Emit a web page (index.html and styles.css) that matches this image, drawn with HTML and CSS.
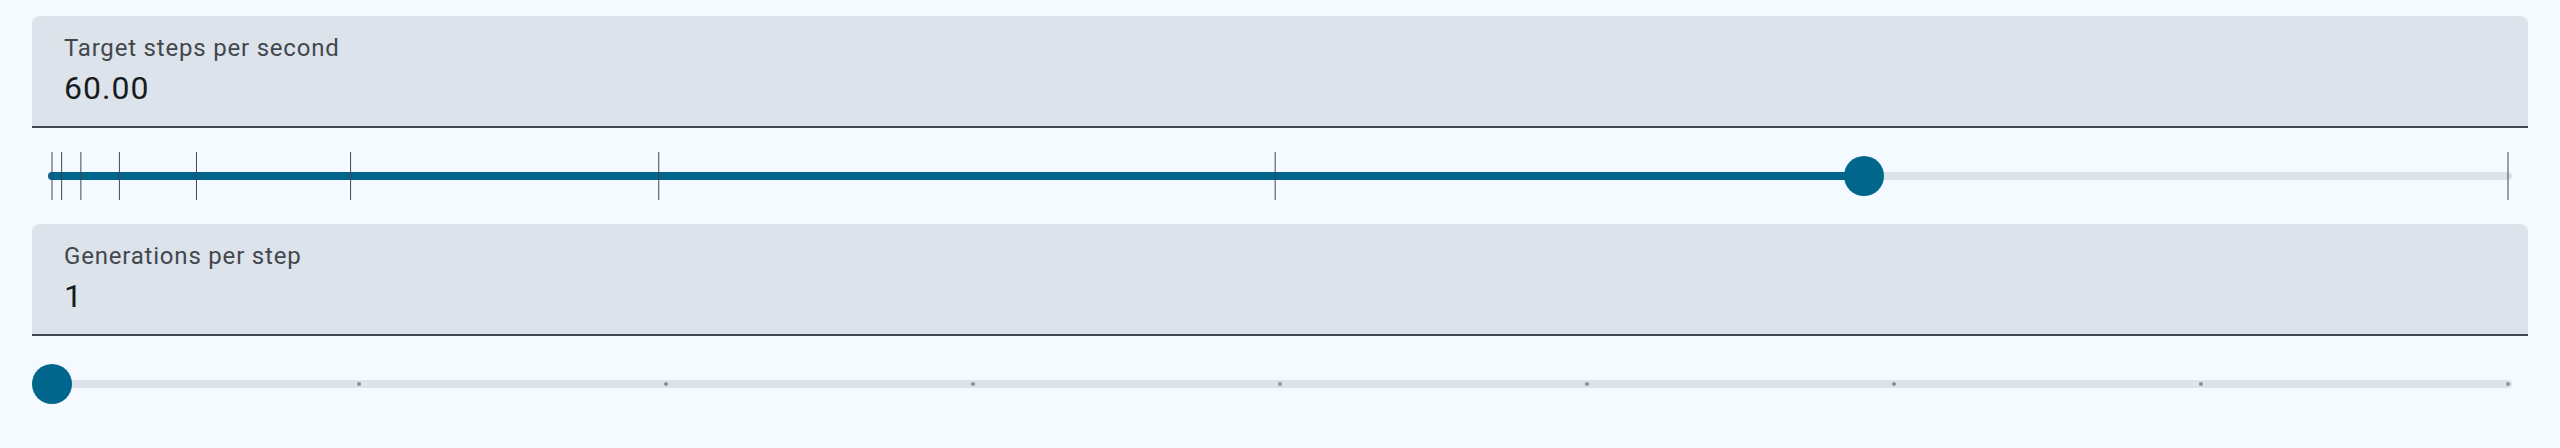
FILE: index.html
```html
<!DOCTYPE html>
<html lang="en">
<head>
<meta charset="utf-8">
<title>Simulation speed</title>
<link rel="stylesheet" href="styles.css">
</head>
<body>
<main class="panel">
  <div class="field">
    <label class="field-label" for="sps">Target steps per second</label>
    <div class="field-value" id="sps">60.00</div>
  </div>
  <div class="slider">
    <div class="track"></div>
    <div class="track-active" style="width: calc(4px + 0.7378 * (100% - 40px))"></div>
    <svg class="ticks" width="100%" height="48" aria-hidden="true">
      <line x1="0%" x2="0%" y1="0" y2="48"></line>
      <line x1="0.392%" x2="0.392%" y1="0" y2="48"></line>
      <line x1="1.176%" x2="1.176%" y1="0" y2="48"></line>
      <line x1="2.745%" x2="2.745%" y1="0" y2="48"></line>
      <line x1="5.882%" x2="5.882%" y1="0" y2="48"></line>
      <line x1="12.157%" x2="12.157%" y1="0" y2="48"></line>
      <line x1="24.706%" x2="24.706%" y1="0" y2="48"></line>
      <line x1="49.804%" x2="49.804%" y1="0" y2="48"></line>
      <line x1="100%" x2="100%" y1="0" y2="48"></line>
    </svg>
    <div class="handle" style="left: calc(20px + 0.7378 * (100% - 40px))"></div>
  </div>

  <div class="field">
    <label class="field-label" for="gps">Generations per step</label>
    <div class="field-value" id="gps">1</div>
  </div>
  <div class="slider">
    <div class="track"></div>
    <svg class="dots" width="100%" height="8" aria-hidden="true">
      <circle cx="0%" cy="4" r="2"></circle>
      <circle cx="12.5%" cy="4" r="2"></circle>
      <circle cx="25%" cy="4" r="2"></circle>
      <circle cx="37.5%" cy="4" r="2"></circle>
      <circle cx="50%" cy="4" r="2"></circle>
      <circle cx="62.5%" cy="4" r="2"></circle>
      <circle cx="75%" cy="4" r="2"></circle>
      <circle cx="87.5%" cy="4" r="2"></circle>
      <circle cx="100%" cy="4" r="2"></circle>
    </svg>
    <div class="handle" style="left: calc(20px + 0 * (100% - 40px))"></div>
  </div>
</main>
</body>
</html>
```

FILE: styles.css
```css
html, body {
  margin: 0;
  padding: 0;
}

body {
  background: #f4faff;
  font-family: Roboto, "Noto Sans", "Liberation Sans", sans-serif;
  color: #181c20;
}

.panel {
  display: flex;
  flex-direction: column;
  padding: 16px 32px;
}

.field {
  display: flex;
  flex-direction: column;
  background: #dce3ea;
  border-radius: 8px 8px 0 0;
  border-bottom: 2px solid #41474e;
  padding: 16px 32px 14px;
}

.field-label {
  font-size: 24px;
  line-height: 32px;
  letter-spacing: 0.8px;
  color: #42474e;
}

.field-value {
  font-size: 32px;
  line-height: 48px;
  letter-spacing: 1px;
  color: #181c20;
}

.slider {
  position: relative;
  height: 96px;
}

.track {
  position: absolute;
  left: 16px;
  right: 16px;
  top: 44px;
  height: 8px;
  border-radius: 4px;
  background: #dce3ea;
}

.track-active {
  position: absolute;
  left: 16px;
  top: 44px;
  height: 8px;
  border-radius: 4px 0 0 4px;
  background: #00668b;
}

.ticks {
  position: absolute;
  left: 20px;
  top: 24px;
  width: calc(100% - 40px);
  overflow: visible;
}

.ticks line {
  stroke: #41484e;
  stroke-width: 1;
}

.dots {
  position: absolute;
  left: 20px;
  top: 44px;
  width: calc(100% - 40px);
  overflow: visible;
}

.dots circle {
  fill: #8d939a;
}

.handle {
  position: absolute;
  top: 28px;
  width: 40px;
  height: 40px;
  margin-left: -20px;
  border-radius: 50%;
  background: #00668b;
}
```
